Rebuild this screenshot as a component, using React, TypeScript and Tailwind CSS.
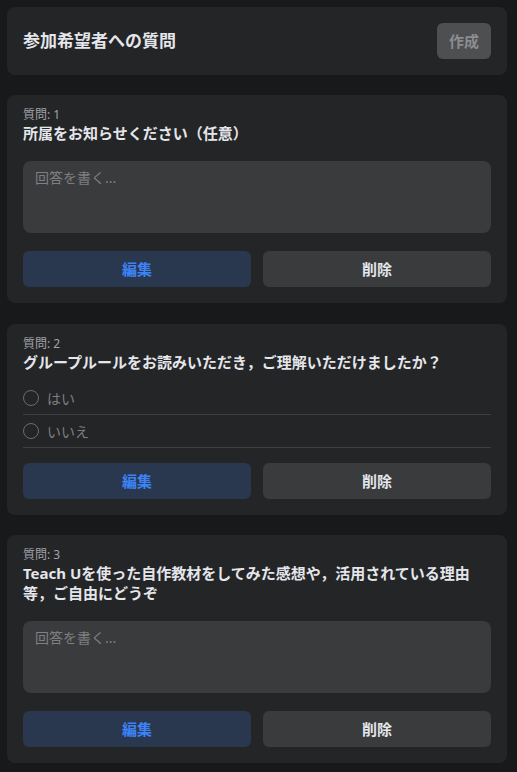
import React from "react";

const font = { fontFamily: '"Noto Sans", "Noto Sans CJK JP", sans-serif' };

function Buttons() {
  return (
    <div className="flex gap-3">
      <button className="flex-1 h-9 rounded-md bg-[#29374f] text-[#3d83f5] text-[15px] font-bold">
        編集
      </button>
      <button className="flex-1 h-9 rounded-md bg-[#3a3b3c] text-[#e4e6eb] text-[15px] font-bold">
        削除
      </button>
    </div>
  );
}

function TextArea() {
  return (
    <div className="h-[72px] rounded-lg bg-[#3a3b3c] px-3 pt-[7px] text-[14px] leading-5 text-[#7d7f83]">
      回答を書く...
    </div>
  );
}

function Card({ n, title, children }: { n: number; title: React.ReactNode; children: React.ReactNode }) {
  return (
    <div className="w-[500px] rounded-lg bg-[#242526] px-4 pt-3 pb-4">
      <div className="text-[12px] leading-4 text-[#a0a3a8]">質問: {n}</div>
      <div className="text-[15px] leading-5 font-bold text-[#e4e6eb]">{title}</div>
      {children}
    </div>
  );
}

function Radio({ label }: { label: string }) {
  return (
    <div className="flex h-[33px] items-center gap-2 border-b border-[#3e4042]">
      <span className="h-4 w-4 rounded-full border-[1.5px] border-[#6a6c70]" />
      <span className="text-[14px] text-[#7d7f83]">{label}</span>
    </div>
  );
}

export default function App() {
  return (
    <div className="min-h-[772px] bg-[#18191a] pl-[7px] pr-[10px] pt-[7px] pb-[10px]" style={font}>
      <div className="flex w-[500px] items-center justify-between rounded-lg bg-[#242526] p-4">
        <div className="text-[17px] font-bold text-[#e4e6eb]">参加希望者への質問</div>
        <button className="h-9 w-[54px] rounded-md bg-[#4e4f50] text-[15px] font-bold text-[#8a8d91]">
          作成
        </button>
      </div>

      <div className="mt-5">
        <Card n={1} title="所属をお知らせください（任意）">
          <div className="mt-[18px]">
            <TextArea />
          </div>
          <div className="mt-[18px]">
            <Buttons />
          </div>
        </Card>
      </div>

      <div className="mt-[21px]">
        <Card n={2} title="グループルールをお読みいただき，ご理解いただけましたか？">
          <div className="mt-[10px]">
            <Radio label="はい" />
            <Radio label="いいえ" />
          </div>
          <div className="mt-[15px]">
            <Buttons />
          </div>
        </Card>
      </div>

      <div className="mt-5">
        <Card
          n={3}
          title={
            <>
              Teach Uを使った自作教材をしてみた感想や，活用されている理由
              <br />
              等，ご自由にどうぞ
            </>
          }
        >
          <div className="mt-[18px]">
            <TextArea />
          </div>
          <div className="mt-[18px]">
            <Buttons />
          </div>
        </Card>
      </div>
    </div>
  );
}
